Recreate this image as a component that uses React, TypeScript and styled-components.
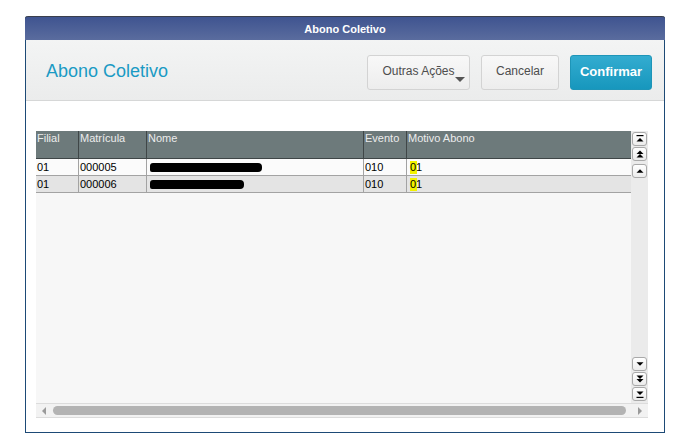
import React from 'react';
import styled, { createGlobalStyle } from 'styled-components';

const GlobalStyle = createGlobalStyle`
  html, body {
    margin: 0;
    padding: 0;
    background: #ffffff;
    font-family: 'Liberation Sans', Arial, sans-serif;
  }
`;

const Page = styled.div`
  width: 675px;
  height: 439px;
  padding: 16px 0 0 25px;
  box-sizing: border-box;
`;

const Window = styled.div`
  width: 640px;
  height: 417px;
  display: flex;
  flex-direction: column;
  box-sizing: border-box;
  border: 1px solid #1d4a76;
  border-top: none;
  border-radius: 3px 3px 0 0;
  background: #ffffff;
`;

const TitleBar = styled.div`
  height: 24px;
  margin: 0 -1px;
  border-radius: 3px 3px 0 0;
  border-top: 1px solid #3a3f4c;
  background: linear-gradient(#3f5490, #5a6c9e);
  color: #ffffff;
  font-size: 11px;
  font-weight: bold;
  display: flex;
  align-items: center;
  justify-content: center;
  box-sizing: border-box;
`;

const Header = styled.div`
  height: 61px;
  box-sizing: border-box;
  background: linear-gradient(#f3f4f4, #ebecec);
  border-bottom: 1px solid #d6d7d7;
  display: flex;
  align-items: center;
  padding: 4px 12px 0 20px;
`;

const HeaderTitle = styled.h1`
  flex: 1;
  margin: 0;
  font-size: 18px;
  font-weight: normal;
  color: #1a9ac4;
  padding-bottom: 2px;
`;

const Actions = styled.div`
  display: flex;
  gap: 11px;
  align-items: center;
`;

const Button = styled.button<{ $primary?: boolean; $w: number }>`
  position: relative;
  width: ${(p) => p.$w}px;
  height: 35px;
  box-sizing: border-box;
  border-radius: 3px;
  font-family: 'Liberation Sans', Arial, sans-serif;
  font-size: ${(p) => (p.$primary ? '13px' : '12px')};
  font-weight: ${(p) => (p.$primary ? 'bold' : 'normal')};
  color: ${(p) => (p.$primary ? '#ffffff' : '#4d4d4d')};
  border: 1px solid ${(p) => (p.$primary ? '#1e95b8' : '#d3d3d3')};
  background: ${(p) =>
    p.$primary ? 'linear-gradient(#33acd0, #1797bd)' : 'linear-gradient(#f8f8f8, #ededed)'};
  padding: 0 0 2px;
`;

const Caret = styled.span`
  position: absolute;
  right: 4px;
  bottom: 7px;
  width: 0;
  height: 0;
  border-left: 5px solid transparent;
  border-right: 5px solid transparent;
  border-top: 5px solid #555;
`;

const Body = styled.div`
  flex: 1;
  padding: 30px 16px 14px 10px;
  display: flex;
`;

const GridBox = styled.div`
  flex: 1;
  background: #f7f7f7;
  display: grid;
  grid-template-columns: 1fr 17px;
  grid-template-rows: 1fr 15px;
`;

const TableArea = styled.div`
  display: flex;
  flex-direction: column;
`;

const cols = '43px 68px 217px 43px 1fr';

const HeadRow = styled.div`
  display: grid;
  grid-template-columns: ${cols};
  height: 28px;
  background: #6d7a7b;
  border-bottom: 1px solid #3f4647;
  box-sizing: border-box;
`;

const HeadCell = styled.div`
  color: #ececec;
  font-size: 11px;
  padding: 1px 2px 0 1px;
  border-right: 1px solid #3f4647;
  &:last-child {
    border-right: none;
  }
`;

const Row = styled.div<{ $alt?: boolean }>`
  display: grid;
  grid-template-columns: ${cols};
  height: 17px;
  box-sizing: border-box;
  background: ${(p) => (p.$alt ? '#e4e4e4' : '#fbfbfb')};
  border-bottom: 1px solid #a3a3a3;
`;

const Cell = styled.div`
  font-size: 11px;
  color: #000;
  padding: 2px 1px 0 1px;
  border-right: 1px solid #a3a3a3;
  line-height: 13px;
  white-space: nowrap;
  overflow: hidden;
  &:last-child {
    border-right: none;
  }
`;

const Highlight = styled.span`
  background: #f2f200;
  display: inline-block;
  width: 7px;
  margin-left: 2px;
  overflow: visible;
`;

const Redact = styled.span<{ $w: number }>`
  display: inline-block;
  width: ${(p) => p.$w}px;
  height: 9px;
  margin-left: 2px;
  vertical-align: -1px;
  background: #000;
  border-radius: 3px 4px 4px 2px;
`;

const VScroll = styled.div`
  display: flex;
  flex-direction: column;
  justify-content: space-between;
  align-items: center;
  background: #ebebeb;
  padding: 1px 0 2px;
`;

const BtnGroup = styled.div<{ $gap: number }>`
  display: flex;
  flex-direction: column;
  gap: ${(p) => p.$gap}px;
`;

const ScrollBtn = styled.div<{ $spaced?: boolean }>`
  width: 15px;
  height: 14px;
  margin-top: ${(p) => (p.$spaced ? '2px' : '0')};
  box-sizing: border-box;
  border: 1px solid #a9a9a9;
  border-radius: 3px;
  background: linear-gradient(#ffffff, #ececec);
  display: flex;
  align-items: center;
  justify-content: center;
`;

const HScroll = styled.div`
  grid-column: 1 / span 2;
  display: flex;
  align-items: center;
  gap: 6px;
  padding: 0 5px 0 6px;
  background: #f2f2f2;
  border-top: 1px solid #dcdcdc;
  border-bottom: 1px solid #dcdcdc;
`;

const Thumb = styled.div`
  flex: 1;
  height: 9px;
  border-radius: 5px;
  background: #b3b3b3;
  margin-right: 6px;
`;

type Kind = 'first' | 'pgup' | 'up' | 'down' | 'pgdn' | 'last';

function Arrow({ kind }: { kind: Kind }) {
  const down = kind === 'down' || kind === 'pgdn' || kind === 'last';
  const tri = (y: number) =>
    down ? `M1.5 ${y} L8.5 ${y} L5 ${y + 3.5} Z` : `M1.5 ${y + 3.5} L8.5 ${y + 3.5} L5 ${y} Z`;
  return (
    <svg width="10" height="10" viewBox="0 0 10 10">
      {kind === 'first' && <rect x="1.5" y="1" width="7" height="1.2" fill="#000" />}
      {kind === 'first' && <path d={tri(4)} fill="#000" />}
      {(kind === 'pgup' || kind === 'pgdn') && (
        <>
          <path d={tri(1.5)} fill="#000" />
          <path d={tri(5)} fill="#000" />
        </>
      )}
      {(kind === 'up' || kind === 'down') && <path d={tri(3.3)} fill="#000" />}
      {kind === 'last' && <path d={tri(2.5)} fill="#000" />}
      {kind === 'last' && <rect x="1.5" y="7.8" width="7" height="1.2" fill="#000" />}
    </svg>
  );
}

function HArrow({ dir }: { dir: 'left' | 'right' }) {
  return (
    <svg width="5" height="8" viewBox="0 0 5 8">
      <path d={dir === 'left' ? 'M4 0 L4 8 L0 4 Z' : 'M0 0 L0 8 L4 4 Z'} fill="#9a9a9a" />
    </svg>
  );
}

const rows = [
  { filial: '01', mat: '000005', name: 112, evento: '010', motivo: '01' },
  { filial: '01', mat: '000006', name: 94, evento: '010', motivo: '01' },
];

export default function App() {
  return (
    <Page>
      <GlobalStyle />
      <Window>
        <TitleBar>Abono Coletivo</TitleBar>
        <Header>
          <HeaderTitle>Abono Coletivo</HeaderTitle>
          <Actions>
            <Button $w={103}>
              Outras Ações
              <Caret />
            </Button>
            <Button $w={78}>Cancelar</Button>
            <Button $w={82} $primary>
              Confirmar
            </Button>
          </Actions>
        </Header>
        <Body>
          <GridBox>
            <TableArea>
              <HeadRow>
                <HeadCell>Filial</HeadCell>
                <HeadCell>Matrícula</HeadCell>
                <HeadCell>Nome</HeadCell>
                <HeadCell>Evento</HeadCell>
                <HeadCell>Motivo Abono</HeadCell>
              </HeadRow>
              {rows.map((r, i) => (
                <Row key={r.mat} $alt={i === 1}>
                  <Cell>{r.filial}</Cell>
                  <Cell>{r.mat}</Cell>
                  <Cell>
                    <Redact $w={r.name} />
                  </Cell>
                  <Cell>{r.evento}</Cell>
                  <Cell>
                    <Highlight>{r.motivo}</Highlight>
                  </Cell>
                </Row>
              ))}
            </TableArea>
            <VScroll>
              <BtnGroup $gap={1}>
                <ScrollBtn>
                  <Arrow kind="first" />
                </ScrollBtn>
                <ScrollBtn>
                  <Arrow kind="pgup" />
                </ScrollBtn>
                <ScrollBtn $spaced>
                  <Arrow kind="up" />
                </ScrollBtn>
              </BtnGroup>
              <BtnGroup $gap={1}>
                <ScrollBtn>
                  <Arrow kind="down" />
                </ScrollBtn>
                <ScrollBtn>
                  <Arrow kind="pgdn" />
                </ScrollBtn>
                <ScrollBtn>
                  <Arrow kind="last" />
                </ScrollBtn>
              </BtnGroup>
            </VScroll>
            <HScroll>
              <HArrow dir="left" />
              <Thumb />
              <HArrow dir="right" />
            </HScroll>
          </GridBox>
        </Body>
      </Window>
    </Page>
  );
}
